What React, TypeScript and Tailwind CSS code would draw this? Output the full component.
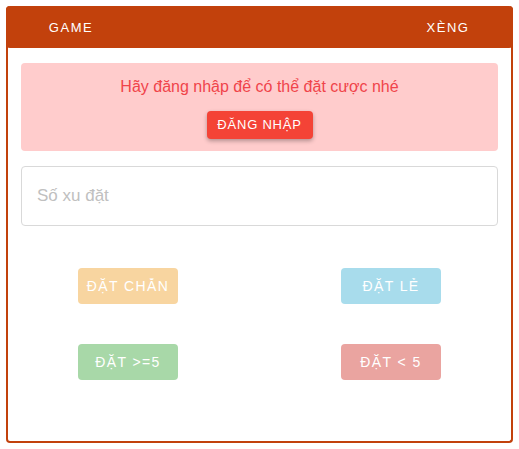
import { useState } from "react";

const betButtons = [
  { label: "ĐẶT CHẴN", color: "bg-[#f8d5a0]" },
  { label: "ĐẶT LẺ", color: "bg-[#a8dcec]" },
  { label: "ĐẶT >=5", color: "bg-[#a8d8a8]" },
  { label: "ĐẶT < 5", color: "bg-[#eaa4a0]" },
];

export default function App() {
  const [amount, setAmount] = useState("");

  return (
    <div className="h-[449px] w-[519px] bg-white p-[6px] font-['Liberation_Sans',Arial,sans-serif]">
      <div className="flex h-[437px] flex-col rounded-[4px] border-2 border-t-0 border-[#c2410c]">
        <div className="-mx-[2px] flex h-[42px] items-center justify-between rounded-[4px] bg-[#c2410c] px-[2px] pt-[1px]">
          <button className="w-[126px] text-[13px] tracking-[0.12em] text-white">
            GAME
          </button>
          <button className="w-[126px] text-[13px] tracking-[0.12em] text-white">
            XÈNG
          </button>
        </div>

        <div className="flex flex-col px-[13px] pt-[15px]">
          <div className="flex h-[88px] flex-col items-center rounded-[4px] bg-[#ffcccc] pt-[14px]">
            <p className="text-[16px] leading-[20px] text-[#f0444a]">
              Hãy đăng nhập để có thể đặt cược nhé
            </p>
            <button className="mt-[14px] h-[28px] w-[106px] rounded-[4px] bg-[#f44336] text-[13px] tracking-[0.06em] text-white shadow-[0_2px_4px_rgba(0,0,0,0.3)]">
              ĐĂNG NHẬP
            </button>
          </div>

          <input
            value={amount}
            onChange={(e) => setAmount(e.target.value)}
            placeholder="Số xu đặt"
            className="mt-[15px] h-[60px] w-full rounded-[4px] border border-[#d9d9d9] px-[15px] text-[17px] text-gray-700 outline-none placeholder:text-[#c0c0c0]"
          />

          <div className="mt-[42px] grid grid-cols-2 gap-y-[40px] px-[57px]">
            {betButtons.map((b, i) => (
              <button
                key={b.label}
                className={`h-[36px] w-[100px] rounded-[4px] text-[14px] tracking-[0.1em] text-white ${b.color} ${
                  i % 2 === 1 ? "justify-self-end" : "justify-self-start"
                }`}
              >
                {b.label}
              </button>
            ))}
          </div>
        </div>
      </div>
    </div>
  );
}
